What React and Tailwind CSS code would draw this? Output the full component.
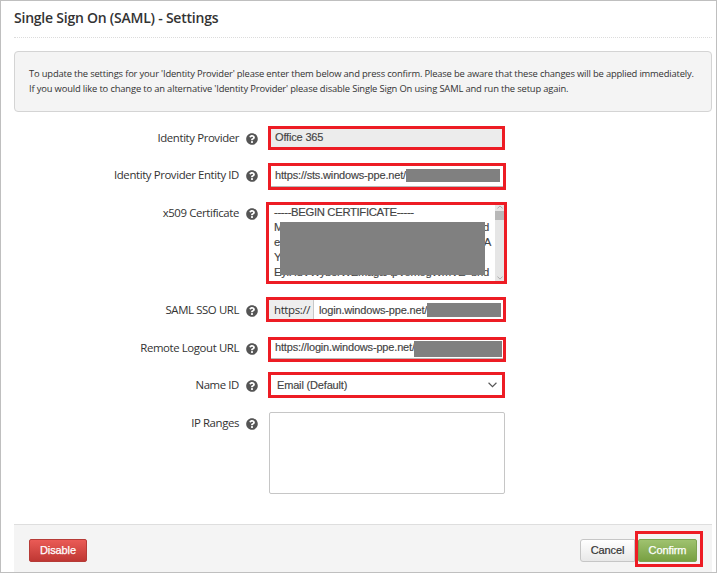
import React from "react";
import { FaQuestionCircle } from "react-icons/fa";

function Row({ label, rowClass, labelClass, indent, children }) {
  return (
    <div className={`flex items-start ${rowClass}`}>
      <div className={`flex items-center ${labelClass}`}>
        <label className="w-[238px] whitespace-nowrap text-right text-[11.4px] leading-[16px] tracking-[-0.39px] text-[#333]">
          {label}
        </label>
        <FaQuestionCircle className="ml-[7px] mt-[2px] h-[12px] w-[12px] text-[#555]" />
      </div>
      <div className={indent}>{children}</div>
    </div>
  );
}

const field =
  "flex border-[3px] border-[#ed1c24] bg-white font-['Liberation_Sans',sans-serif] text-[11px] leading-[13px] tracking-[-0.17px] text-[#444] [-webkit-text-stroke:0.15px_#444] whitespace-nowrap overflow-hidden";

function Caret({ className, flip }) {
  return (
    <svg viewBox="0 0 8 5" className={className} fill="none" stroke="currentColor">
      <path d={flip ? "M0.5 4.5 4 1 7.5 4.5" : "M0.5 0.5 4 4 7.5 0.5"} />
    </svg>
  );
}

export default function App() {
  return (
    <div className="flex h-[573px] w-[717px] flex-col border border-[#bfbfbf] bg-white pl-[13px] font-['Open_Sans',sans-serif] text-[#333]">
      <header className="mr-[4px] h-[37px] border-b border-dotted border-[#dcdcdc]">
        <h1 className="pt-[7px] text-[14px] font-semibold leading-[20px] tracking-[-0.23px]">
          Single Sign On (SAML) - Settings
        </h1>
      </header>

      <section className="mr-[4px] mt-[13px] h-[61px] rounded-[4px] border border-[#d4d4d4] bg-[#f4f4f4] pl-[14px] pt-[14px] text-[9.4px] leading-[15px] tracking-[-0.168px] whitespace-nowrap">
        <p>
          To update the settings for your 'Identity Provider' please enter them below and press confirm. Please be
          aware that these changes will be applied immediately.
        </p>
        <p className="tracking-[-0.158px]">
          If you would like to change to an alternative 'Identity Provider' please disable Single Sign On using SAML
          and run the setup again.
        </p>
      </section>

      <form className="-ml-[13px] mt-[14px] flex h-[398px] flex-col">
        <Row label="Identity Provider" rowClass="h-[37px]" labelClass="mt-[4px]" indent="ml-[10px]">
          <div className={`${field} h-[24px] w-[237px] !bg-[#ececec] pl-[4px] pt-[2px]`}>Office 365</div>
        </Row>
        <Row label="Identity Provider Entity ID" rowClass="h-[39px]" labelClass="mt-[4px]" indent="ml-[10px]">
          <div className={`${field} h-[27px] w-[238px]`}>
            <div className="flex h-[21px] w-full border-b border-[#b8b8b8] pl-[4px]">
              <span className="w-[131px] pt-[3px]">https://sts.windows-ppe.net/</span>
              <span className="mt-[3px] h-[13px] w-[94px] bg-[#808080]" />
            </div>
          </div>
        </Row>
        <Row label="x509 Certificate" rowClass="h-[95px]" labelClass="mt-[3px]" indent="ml-[8px]">
          <div className={`${field} relative h-[82px] w-[241px] justify-between`}>
            <div className="w-[222px] pl-[5px] text-[11.3px] leading-[15px] tracking-[-0.34px]">
              <p>-----BEGIN CERTIFICATE-----</p>
              <p className="flex justify-between pr-[2px]"><span>M</span><span>d</span></p>
              <p className="flex justify-between"><span>e</span><span>A</span></p>
              <p>Y</p>
              <p className="flex justify-between pr-[2px]"><span>EyiHuVWyberWEMagaApVomogWmVE</span><span>bnd</span></p>
            </div>
            <div className="absolute left-[11px] top-[17px] h-[53px] w-[205px] bg-[#808080]" />
            <div className="flex h-full w-[9px] flex-col items-center bg-[#e6e6e6] text-[#999]">
              <Caret flip className="h-[4px] w-[6px] shrink-0" />
              <span className="mt-[2px] h-[9px] w-full bg-[#b8b8b8]" />
              <Caret className="mb-[1px] mt-auto h-[4px] w-[6px] shrink-0" />
            </div>
          </div>
        </Row>
        <Row label="SAML SSO URL" rowClass="h-[40px]" labelClass="mt-[5px]" indent="ml-[8px]">
          <div className={`${field} h-[25px] w-[240px]`}>
            <span className="w-[45px] border-r border-[#c8c8c8] bg-[#eee] pl-[5px] pt-[2px] font-['Open_Sans',sans-serif] text-[11.5px] leading-[15px] tracking-[-0.4px] text-[#333] [-webkit-text-stroke:0px]">
              https://
            </span>
            <span className="w-[113px] pl-[5px] pt-[4px]">login.windows-ppe.net/</span>
            <span className="mt-[3px] h-[14px] w-[74px] bg-[#808080]" />
          </div>
        </Row>
        <Row label="Remote Logout URL" rowClass="h-[35px]" labelClass="mt-[3px]" indent="ml-[10px]">
          <div className={`${field} h-[25px] w-[238px]`}>
            <div className="flex h-[19px] w-full border-b border-[#b8b8b8] pl-[4px]">
              <span className="w-[139px] pt-px">https://login.windows-ppe.net/</span>
              <span className="mt-px h-[16px] w-[88px] bg-[#808080]" />
            </div>
          </div>
        </Row>
        <Row label="Name ID" rowClass="h-[40px]" labelClass="mt-[5px]" indent="ml-[10px]">
          <div className={`${field} h-[26px] w-[237px] justify-between pl-[6px] pt-[4px]`}>
            <span>Email (Default)</span>
            <Caret className="mr-[5px] mt-[3px] h-[6px] w-[9px] text-[#555]" />
          </div>
        </Row>
        <Row label="IP Ranges" rowClass="h-[112px]" labelClass="mt-[3px]" indent="ml-[11px]">
          <div className="h-[82px] w-[236px] rounded-[2px] border border-[#c6c6c6]" />
        </Row>
      </form>

      <footer className="mr-[4px] flex h-[48px] items-start border-t border-[#dedede] bg-[#f4f4f4] font-['Liberation_Sans',sans-serif] text-[11px] leading-[13px] tracking-[-0.1px]">
        <button className="ml-[15px] mt-[14px] h-[23px] w-[58px] rounded-[2px] border border-[#b63b37] bg-linear-to-b from-[#ea5b56] to-[#bf3733] text-white [-webkit-text-stroke:0.25px_white]">
          Disable
        </button>
        <button className="ml-auto mt-[14px] h-[23px] w-[55px] rounded-l-[3px] border border-[#c6c6c6] bg-linear-to-b from-white to-[#e8e8e8] text-[#333] [-webkit-text-stroke:0.2px_#333]">
          Cancel
        </button>
        <div className="mr-[9px] mt-[6px] flex h-[36px] w-[68px] border-[3px] border-[#ed1c24] pt-[5px]">
          <button className="h-[23px] w-[59px] rounded-[2px] border border-[#7da251] bg-linear-to-b from-[#9fc26f] to-[#78a042] text-white [-webkit-text-stroke:0.25px_white]">
            Confirm
          </button>
        </div>
      </footer>
    </div>
  );
}
